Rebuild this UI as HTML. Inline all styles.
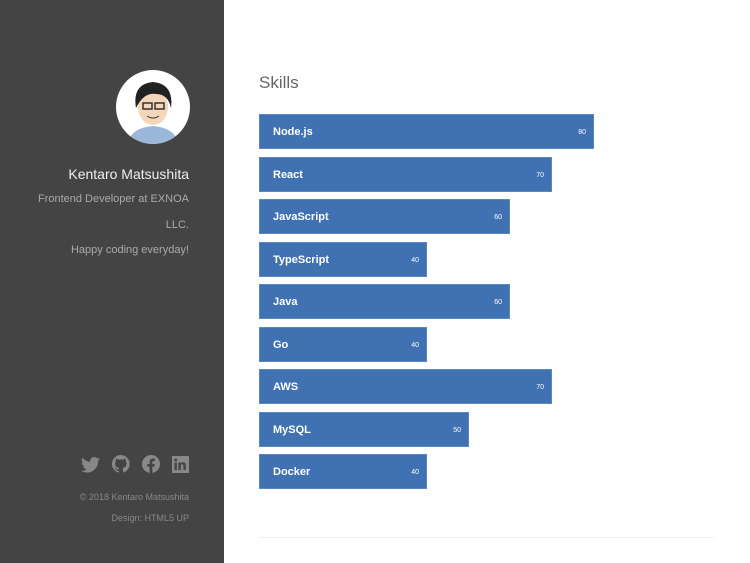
<!DOCTYPE html>
<html><head><style>
body{margin:0;width:750px;height:563px;overflow:hidden;font-family:"Liberation Sans",sans-serif;background:#fff;position:relative}
#side{position:absolute;left:0;top:0;width:224px;height:563px;background:#444;color:#aaa;text-align:right}
.t{position:absolute;right:35px;white-space:nowrap}
h2{position:absolute;left:259px;top:73px;margin:0;font-weight:normal;font-size:17px;color:#666}
.bar{position:absolute;left:259px;height:35px;background:#4071b3;color:#fff;font-size:11px;font-weight:bold;box-shadow:inset 0 0 0 1px #5a86c2}
.bar span{position:absolute;left:14px;top:12px}
.bar i{position:absolute;right:8px;top:15px;font-size:7px;font-style:normal;font-weight:normal}
.ic{position:absolute;top:455px}
</style></head><body>
<div id="side">
<svg style="position:absolute;left:116px;top:70px" width="74" height="74" viewBox="0 0 74 74">
<circle cx="37" cy="37" r="37" fill="#fff"/>
<clipPath id="c"><circle cx="37" cy="37" r="37"/></clipPath>
<g clip-path="url(#c)">
<path d="M12 74 Q14 58 37 56 Q60 58 62 74Z" fill="#9bb7d9"/>
<ellipse cx="37" cy="37" rx="15" ry="18" fill="#f6d6b8"/>
<path d="M20 38 Q16 14 37 12 Q58 14 55 38 Q52 24 40 24 Q28 22 20 38Z" fill="#222"/>
<rect x="27" y="33" width="9" height="6" fill="none" stroke="#333" stroke-width="1.5"/>
<rect x="39" y="33" width="9" height="6" fill="none" stroke="#333" stroke-width="1.5"/>
<path d="M31 46 Q37 50 43 46" stroke="#333" fill="none"/>
</g></svg>
<div class="t" style="top:166px;font-size:14px;color:#eee">Kentaro Matsushita</div>
<div class="t" style="top:193px;font-size:11px">Frontend Developer at EXNOA</div>
<div class="t" style="top:219px;font-size:11px">LLC.</div>
<div class="t" style="top:244px;font-size:11px">Happy coding everyday!</div>
<svg class="ic" style="left:81px;top:457px" width="19" height="16" viewBox="0 0 24 20"><path fill="#888" d="M24 2.4a10 10 0 0 1-2.8.8A5 5 0 0 0 23.3.4a10 10 0 0 1-3.1 1.2A4.9 4.9 0 0 0 11.8 6 14 14 0 0 1 1.7.9a4.9 4.9 0 0 0 1.5 6.6A5 5 0 0 1 1 6.9a4.9 4.9 0 0 0 3.9 4.8 5 5 0 0 1-2.2.1 4.9 4.9 0 0 0 4.6 3.4A9.9 9.9 0 0 1 0 17.3 14 14 0 0 0 7.5 19.5c9 0 14-7.5 14-14v-.6A10 10 0 0 0 24 2.4z"/></svg>
<svg class="ic" style="left:112px" width="18" height="18" viewBox="0 0 24 24"><path fill="#888" d="M12 0a12 12 0 0 0-3.8 23.4c.6.1.8-.3.8-.6v-2.2c-3.300.7-4-1.4-4-1.4-.6-1.4-1.4-1.8-1.4-1.8-1-.7.1-.7.1-.7 1.2.1 1.8 1.2 1.8 1.2 1 1.8 2.8 1.3 3.5 1 .1-.8.4-1.3.7-1.6-2.7-.3-5.5-1.3-5.5-6 0-1.2.5-2.3 1.2-3.1-.1-.4-.5-1.6.1-3.2 0 0 1-.3 3.3 1.2a11.5 11.5 0 0 1 6 0c2.3-1.5 3.3-1.200 3.3-1.2.6 1.6.2 2.8.1 3.2.8.8 1.2 1.9 1.2 3.1 0 4.6-2.8 5.6-5.5 5.9.4.4.8 1.1.8 2.2v3.3c0 .3.2.7.8.6A12 12 0 0 0 12 0z"/></svg>
<svg class="ic" style="left:142px" width="18" height="18" viewBox="0 0 24 24"><path fill="#888" d="M24 12a12 12 0 1 0-13.9 11.9v-8.4H7.1V12h3V9.4c0-3 1.8-4.7 4.5-4.7 1.3 0 2.7.2 2.7.2v3h-1.5c-1.5 0-2 .9-2 1.9V12h3.3l-.5 3.5h-2.8v8.4A12 12 0 0 0 24 12z"/></svg>
<svg class="ic" style="left:172px;top:456px" width="17" height="17" viewBox="0 0 24 24"><path fill="#888" d="M0 0h24v24H0zM3.5 9v11h3.4V9zm1.7-5.5a2 2 0 1 0 0 4 2 2 0 0 0 0-4zM9 9v11h3.4v-5.5c0-1.4.3-2.8 2-2.8s1.7 1.6 1.7 2.9V20h3.4v-6c0-3-.6-5.2-4.1-5.2-1.7 0-2.8.9-3.2 1.8V9z"/></svg>
<div class="t" style="top:492px;font-size:9px;color:#888">© 2018 Kentaro Matsushita</div>
<div class="t" style="top:513px;font-size:9px;color:#888">Design: HTML5 UP</div>
</div>
<h2>Skills</h2>
<div class="bar" style="top:114px;width:335px"><span>Node.js</span><i>80</i></div>
<div class="bar" style="top:157px;width:293px"><span>React</span><i>70</i></div>
<div class="bar" style="top:199px;width:251px"><span>JavaScript</span><i>60</i></div>
<div class="bar" style="top:242px;width:168px"><span>TypeScript</span><i>40</i></div>
<div class="bar" style="top:284px;width:251px"><span>Java</span><i>60</i></div>
<div class="bar" style="top:327px;width:168px"><span>Go</span><i>40</i></div>
<div class="bar" style="top:369px;width:293px"><span>AWS</span><i>70</i></div>
<div class="bar" style="top:412px;width:210px"><span>MySQL</span><i>50</i></div>
<div class="bar" style="top:454px;width:168px"><span>Docker</span><i>40</i></div>
<div style="position:absolute;left:259px;top:537px;width:456px;height:1px;background:#eee"></div>
</body></html>
